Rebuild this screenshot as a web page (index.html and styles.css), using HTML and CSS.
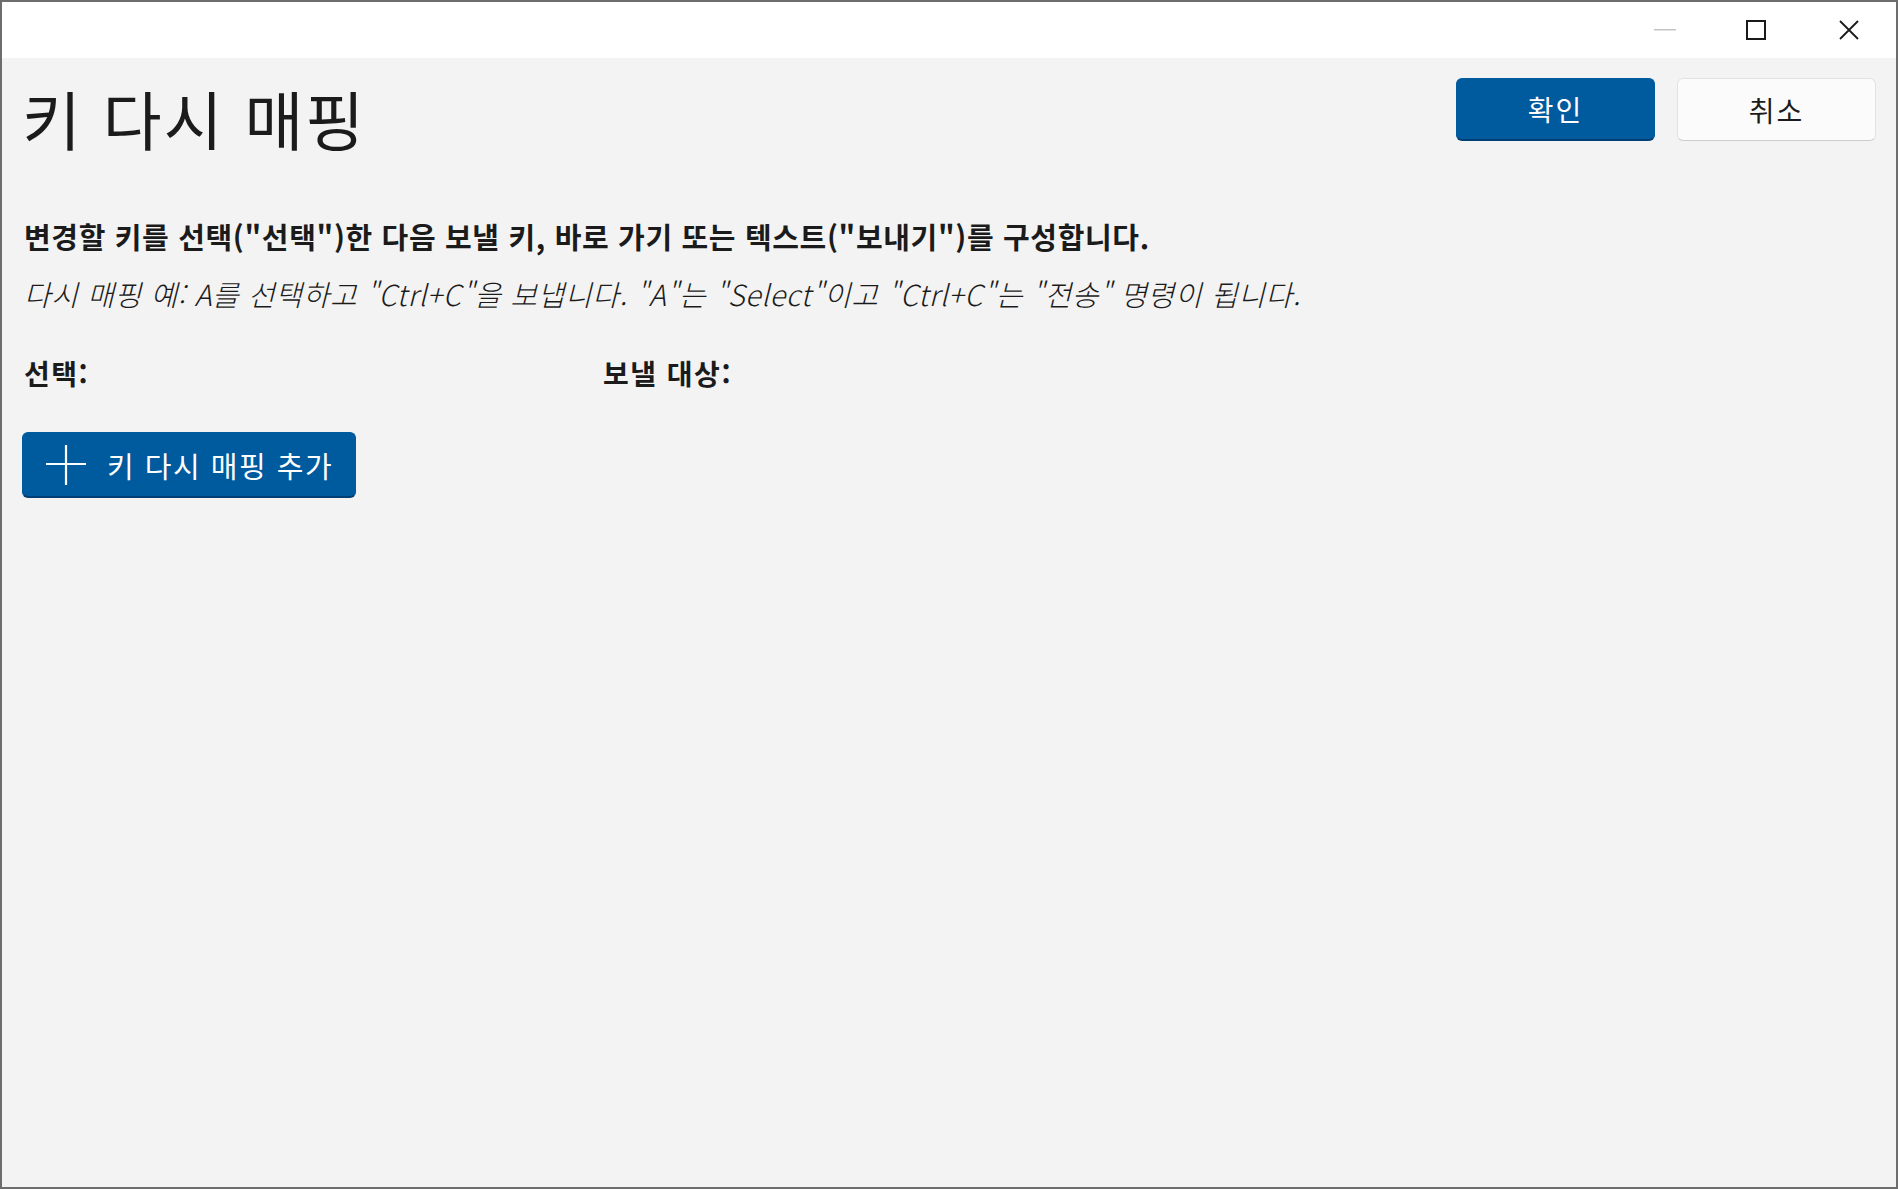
FILE: index.html
```html
<!DOCTYPE html>
<html lang="ko">
<head>
  <meta charset="UTF-8" />
  <meta name="viewport" content="width=device-width, initial-scale=1.0"/>
  <title>키 다시 매핑</title>
  <link rel="stylesheet" href="styles.css">
</head>
<body>
  <div class="window">
    <span class="edge-mark mark-1"></span>
    <span class="edge-mark mark-2"></span>

    <div class="titlebar">
      <div class="caption-btn disabled">
        <svg width="22" height="2" viewBox="0 0 22 2"><rect width="22" height="1.5" fill="#c4c4c4"/></svg>
      </div>
      <div class="caption-btn">
        <svg width="20" height="20" viewBox="0 0 20 20"><rect x="1" y="1" width="18" height="18" fill="none" stroke="#1a1a1a" stroke-width="2"/></svg>
      </div>
      <div class="caption-btn">
        <svg width="20" height="20" viewBox="0 0 20 20"><path d="M1 1 L19 19 M19 1 L1 19" stroke="#1a1a1a" stroke-width="1.8"/></svg>
      </div>
    </div>

    <div class="content">
      <div class="header">
        <h1>키 다시 매핑</h1>
        <div class="actions">
          <button class="btn primary">확인</button>
          <button class="btn">취소</button>
        </div>
      </div>

      <p class="intro">변경할 키를 선택("선택")한 다음 보낼 키, 바로 가기 또는 텍스트("보내기")를 구성합니다.</p>
      <p class="example">다시 매핑 예: A를 선택하고 "Ctrl+C"을 보냅니다. "A"는 "Select"이고 "Ctrl+C"는 "전송" 명령이 됩니다.</p>

      <div class="columns">
        <div class="col-label">선택:</div>
        <div class="col-label">보낼 대상:</div>
      </div>

      <button class="btn primary add-btn">
        <svg width="40" height="40" viewBox="0 0 40 40"><path d="M0 19 H40 M20 0 V40" stroke="#fff" stroke-width="2.2"/></svg>
        <span>키 다시 매핑 추가</span>
      </button>
    </div>
  </div>
</body>
</html>
```

FILE: styles.css
```css
body {
  margin: 0;
  font-family: "Noto Sans CJK KR", "Noto Sans", sans-serif;
  color: #1b1b1b;
  background: #f3f3f3;
}
.window {
  position: relative;
  width: 1898px;
  height: 1189px;
  box-sizing: border-box;
  border: 2px solid #6d6d6d;
  background: #f3f3f3;
  overflow: hidden;
}
.edge-mark {
  position: absolute;
  top: -2px;
  height: 2px;
  background: #2a2a2a;
}
.mark-1 {
  left: 438px;
  width: 15px;
}
.mark-2 {
  left: 798px;
  width: 23px;
}
.titlebar {
  height: 56px;
  background: #ffffff;
  display: flex;
  justify-content: flex-end;
  padding-right: 2px;
}
.caption-btn {
  width: 91px;
  display: flex;
  align-items: center;
  justify-content: center;
}
.caption-btn:nth-child(2) {
  padding-right: 2px;
}
.content {
  padding: 0 21px 0 20px;
}
.header {
  display: flex;
  justify-content: space-between;
  align-items: flex-start;
  padding-top: 20px;
}
h1 {
  margin: 0;
  font-size: 64px;
  font-weight: 400;
  letter-spacing: 2px;
  line-height: 78px;
}
.actions {
  display: flex;
  gap: 22px;
  margin-right: -1px;
}
.btn {
  font-family: inherit;
  width: 199px;
  height: 63px;
  font-size: 28px;
  letter-spacing: 2px;
  border-radius: 6px;
  border: 1px solid #e2e2e2;
  border-bottom-color: #cdcdcd;
  background: #fbfbfb;
  color: #1b1b1b;
  padding: 0;
  cursor: pointer;
}
.btn.primary {
  background: #005a9e;
  border: 1px solid #005a9e;
  border-bottom: 2px solid #003e73;
  color: #ffffff;
}
.intro {
  margin: 60px 0 0 2px;
  font-size: 29px;
  font-weight: 700;
  letter-spacing: 0.65px;
  line-height: 40px;
}
.example {
  margin: 17px 0 0 2px;
  font-size: 29px;
  font-style: italic;
  font-weight: 300;
  letter-spacing: 0.6px;
  line-height: 40px;
}
.columns {
  display: grid;
  grid-template-columns: 579px 1fr;
  margin: 40px 0 0 2px;
}
.col-label {
  font-size: 28px;
  font-weight: 700;
  letter-spacing: 1.5px;
  line-height: 40px;
}
.add-btn {
  display: flex;
  align-items: center;
  gap: 21px;
  width: 334px;
  height: 66px;
  margin-top: 39px;
  padding-left: 23px;
  font-size: 29px;
  letter-spacing: 1.5px;
}
```
